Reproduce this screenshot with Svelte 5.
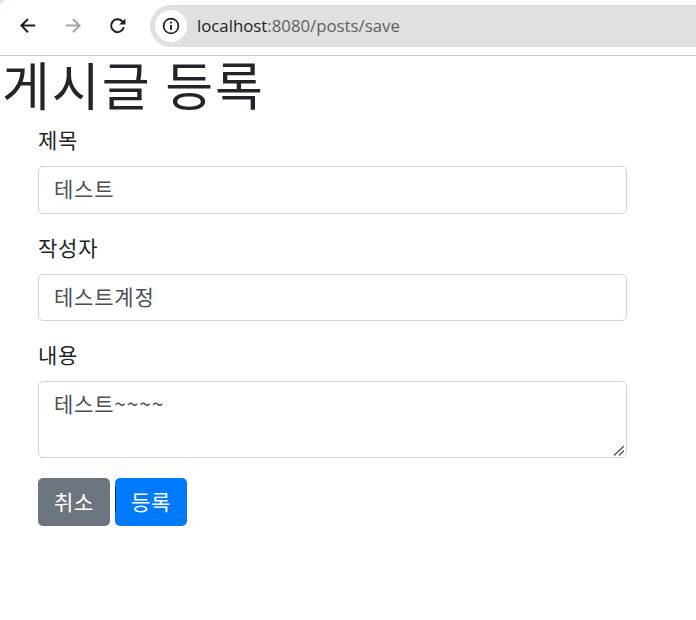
<script>
let title = '테스트';
let author = '테스트계정';
let content = '테스트~~~~';
</script>

<div class="toolbar">
    <div class="corner"></div>
    <button class="nav" aria-label="back">
        <svg width="20" height="20" viewBox="0 0 20 20"><path d="M17.2 9.6H3.6M10 3 3.4 9.6l6.6 6.6" fill="none" stroke="#1f1f1f" stroke-width="2"/></svg>
    </button>
    <button class="nav" aria-label="forward">
        <svg width="20" height="20" viewBox="0 0 20 20"><path d="M2.8 9.6h13.6M10 3l6.6 6.6-6.6 6.6" fill="none" stroke="#a6a6a6" stroke-width="2"/></svg>
    </button>
    <button class="nav" aria-label="reload">
        <svg width="20" height="20" viewBox="0 0 20 20"><path d="M15.8 11.2a6.4 6.4 0 1 1-1.5-5.8L16 7.2" fill="none" stroke="#1f1f1f" stroke-width="2"/><path d="M17.4 2.4v6.2h-6.2z" fill="#1f1f1f"/></svg>
    </button>
    <div class="address">
        <span class="info">
            <svg width="20" height="20" viewBox="0 0 20 20"><circle cx="10" cy="10" r="7.4" fill="none" stroke="#1f1f1f" stroke-width="1.7"/><path d="M10 9v5" stroke="#1f1f1f" stroke-width="1.8"/><circle cx="10" cy="6.6" r="1.1" fill="#1f1f1f"/></svg>
        </span>
        <span class="url"><span class="host">localhost</span>:8080/posts/save</span>
    </div>
</div>

<h1>게시글 등록</h1>
<div class="col">
    <form>
        <div class="form-group">
            <label for="title">제목</label>
            <input id="title" type="text" bind:value={title}>
        </div>
        <div class="form-group">
            <label for="author">작성자</label>
            <input id="author" type="text" bind:value={author}>
        </div>
        <div class="form-group">
            <label for="content">내용</label>
            <div class="area">
                <textarea id="content" rows="2" bind:value={content}></textarea>
                <svg class="grip" width="12" height="11" viewBox="0 0 12 11"><path d="M1 10.5 11 1M6 10.5 11 5.5" fill="none" stroke="#555" stroke-width="1.4"/></svg>
            </div>
        </div>
    </form>
    <div class="actions">
        <button class="btn secondary">취소</button>
        <button class="btn primary">등록</button>
    </div>
</div>

<style>
:global(body) {
    background: #fff;
    color: #212529;
    font-family: "Noto Sans CJK KR", "Noto Sans", sans-serif;
    font-size: 21px;
    letter-spacing: 0.8px;
    line-height: 1.5;
}

.toolbar {
    position: relative;
    display: flex;
    align-items: center;
    box-sizing: border-box;
    height: 56px;
    padding: 0 0 3px 5px;
    border-bottom: 1px solid #c7c7c7;
    overflow: hidden;
    letter-spacing: 0;
}
.corner {
    position: absolute;
    top: -6px;
    left: -6px;
    width: 10px;
    height: 10px;
    border-radius: 50%;
    background: #e4dcf5;
}
.nav {
    display: flex;
    align-items: center;
    justify-content: center;
    width: 45px;
    height: 36px;
    padding: 0;
    border: 0;
    background: none;
}
.address {
    display: flex;
    align-items: center;
    flex: 1;
    height: 42px;
    margin: 0 -40px 0 10px;
    padding-left: 5px;
    border-radius: 21px;
    background: #e0e0e0;
}
.info {
    display: flex;
    align-items: center;
    justify-content: center;
    width: 32px;
    height: 32px;
    border-radius: 50%;
    background: #fff;
}
.url {
    margin-left: 10px;
    font-family: "Open Sans", "Liberation Sans", sans-serif;
    font-size: 16.8px;
    color: #5f5f5f;
}
.host {
    color: #1f1f1f;
}

h1 {
    margin: 0 0 10px;
    padding: 0 0 4px 2px;
    font-size: 52px;
    font-weight: 400;
    letter-spacing: 2px;
    line-height: 56px;
}
.col {
    width: 589px;
    margin-left: 38px;
}
.form-group {
    margin-bottom: 20px;
}
label {
    display: block;
    margin-bottom: 10px;
    padding-bottom: 4px;
    line-height: 26px;
}
input, textarea {
    display: block;
    box-sizing: border-box;
    width: 100%;
    padding: 6px 15px 9px;
    border: 1px solid #ced4da;
    border-radius: 5px;
    color: #495057;
    font: inherit;
    letter-spacing: inherit;
    line-height: 30px;
    background: #fff;
}
input {
    height: 47.5px;
}
textarea {
    height: 77px;
    resize: none;
}
.area {
    position: relative;
}
.grip {
    position: absolute;
    right: 2px;
    bottom: 2px;
}
.actions {
    display: flex;
    gap: 5px;
}
.btn {
    position: relative;
    width: 72px;
    height: 47.5px;
    padding: 0;
    border: 0;
    border-radius: 5px;
    color: #fff;
    font: inherit;
    letter-spacing: inherit;
}
.secondary {
    background: #6c757d;
}
.primary {
    background: #007bff;
}
.primary::before {
    content: "";
    position: absolute;
    top: 9px;
    left: 0;
    width: 1px;
    height: 25px;
    background: #1d2b3a;
}
</style>
